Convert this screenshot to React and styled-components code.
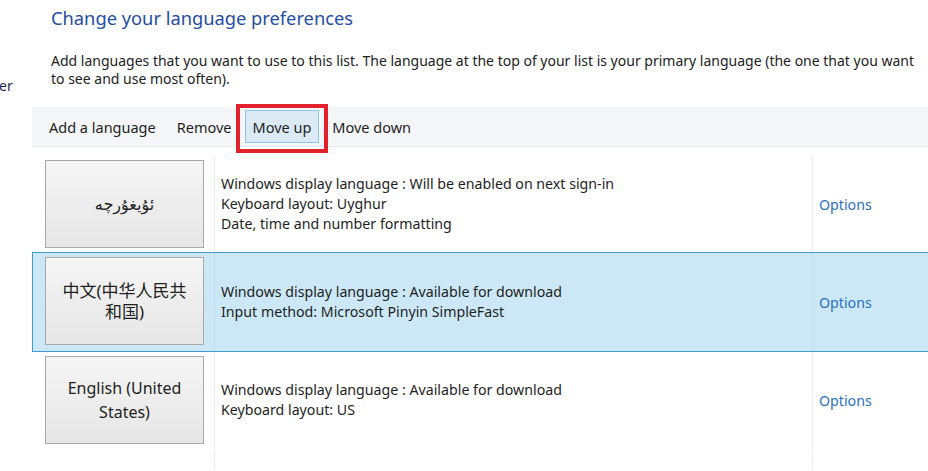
import React from "react";
import styled, {createGlobalStyle} from "styled-components";

const GlobalStyle = createGlobalStyle`
  html, body {
    margin: 0;
    padding: 0;
    background: #fff;
    overflow: hidden;
  }
  body {
    font-family: "Noto Sans", "Noto Sans CJK SC", "DejaVu Sans", sans-serif;
    color: #1e1e1e;
  }
`

const languages = [
  {
    name: 'ئۇيغۇرچە',
    lang: 'ug',
    lines: [
      'Windows display language : Will be enabled on next sign-in',
      'Keyboard layout: Uyghur',
      'Date, time and number formatting',
    ],
  },
  {
    name: '中文(中华人民共和国)',
    lang: 'zh',
    lines: [
      'Windows display language : Available for download',
      'Input method: Microsoft Pinyin SimpleFast',
    ],
    selected: true,
  },
  {
    name: 'English (United States)',
    lang: 'en',
    lines: [
      'Windows display language : Available for download',
      'Keyboard layout: US',
    ],
  },
]

const toolbarItems = ['Add a language', 'Remove', 'Move up', 'Move down']

export default function App() {
  return (
    <>
      <GlobalStyle/>
      <Page>
        <Nav>
          <NavLink>er</NavLink>
        </Nav>
        <Main>
          <Title>Change your language preferences</Title>
          <Description>
            Add languages that you want to use to this list. The language at the top of your list is your primary language (the one that you want
            to see and use most often).
          </Description>
          <Toolbar>
            {toolbarItems.map(item => (
              <ToolButton key={item} $active={item === 'Move up'}>
                {item}
                {item === 'Move up' && <Highlight/>}
              </ToolButton>
            ))}
          </Toolbar>
          <List>
            {languages.map(lang => (
              <Row key={lang.name} $selected={lang.selected}>
                <NameCell>
                  <LangButton lang={lang.lang}>{lang.name}</LangButton>
                </NameCell>
                <InfoCell $selected={lang.selected}>
                  {lang.lines.map(line => <p key={line}>{line}</p>)}
                </InfoCell>
                <OptionsCell $selected={lang.selected}>
                  <OptionsLink>Options</OptionsLink>
                </OptionsCell>
              </Row>
            ))}
            <Row $filler>
              <NameCell/>
              <InfoCell/>
              <OptionsCell/>
            </Row>
          </List>
        </Main>
      </Page>
    </>
  )
}

const Page = styled.div`
  display: grid;
  grid-template-columns: 32px 1fr;
  width: 928px;
  height: 471px;
  overflow: hidden;
`

const Nav = styled.div`
  overflow: hidden;
  padding-top: 74px;
`
const NavLink = styled.span`
  font-size: 14px;
  color: #1b2b5c;
  margin-left: -1px;
`

const Main = styled.div`
  display: flex;
  flex-direction: column;
  min-width: 0;
`

const Title = styled.h1`
  margin: 4px 0 0 19px;
  font-size: 18.3px;
  line-height: 28px;
  font-weight: 400;
  color: #1f4ea3;
`

const Description = styled.p`
  margin: 20px 0 0 19px;
  font-size: 14px;
  line-height: 18px;
  color: #222;
  white-space: pre-line;
`

const Toolbar = styled.div`
  margin-top: 19px;
  height: 39px;
  display: flex;
  align-items: center;
  gap: 5px;
  padding-left: 9px;
  background: #f4f6f9;
  border-bottom: 1px solid #e5e8ec;
`

const ToolButton = styled.div`
  position: relative;
  height: 33px;
  display: flex;
  align-items: center;
  padding: 0 7px;
  font-size: 14.5px;
  color: #1e1e1e;
  box-sizing: border-box;
  border: 1px solid ${p => p.$active ? '#8cc6ea' : 'transparent'};
  background: ${p => p.$active ? '#dceaf6' : 'transparent'};
`

const Highlight = styled.span`
  position: absolute;
  left: -10px;
  right: -10px;
  top: -7px;
  bottom: -11px;
  border: 4px solid #e1212b;
  pointer-events: none;
`

const List = styled.div`
  margin-top: 8px;
  flex: 1;
  display: flex;
  flex-direction: column;
`

const Row = styled.div`
  display: grid;
  grid-template-columns: 181px 598px 1fr;
  flex: ${p => p.$filler ? 1 : 'none'};
  box-sizing: border-box;
  border-top: 1px solid ${p => p.$selected ? '#3d9bd2' : 'transparent'};
  border-bottom: 1px solid ${p => p.$selected ? '#3d9bd2' : 'transparent'};
  border-left: 1px solid ${p => p.$selected ? '#3d9bd2' : 'transparent'};
  margin: ${p => p.$selected ? '-1px 0' : '0'};
  height: ${p => p.$filler ? 'auto' : p.$selected ? '100px' : '98px'};
  background: ${p => p.$selected ? '#cce8f7' : 'transparent'};
`

const NameCell = styled.div`
  display: flex;
  align-items: flex-start;
  padding: 4px 0 0 12px;
`

const LangButton = styled.div`
  width: 159px;
  height: 88px;
  box-sizing: border-box;
  display: flex;
  align-items: center;
  justify-content: center;
  text-align: center;
  padding: 0 12px;
  font-size: 16px;
  line-height: 24px;
  color: #1e1e1e;
  border: 1px solid #a9a9a9;
  background: linear-gradient(180deg, #f5f5f5 0%, #e6e6e6 100%);

  &:lang(zh) {
    font-size: 17px;
    line-height: 21px;
  }
`

const InfoCell = styled.div`
  display: flex;
  flex-direction: column;
  justify-content: center;
  padding-left: 6px;
  border-left: 1px solid ${p => p.$selected ? '#c3deef' : '#e9eef3'};
  font-size: 14.2px;
  line-height: 20px;
  color: #1e1e1e;

  > p {
    margin: 0;
    white-space: nowrap;
  }
`

const OptionsCell = styled.div`
  display: flex;
  align-items: center;
  padding-left: 6px;
  border-left: 1px solid ${p => p.$selected ? '#c3deef' : '#e9eef3'};
`

const OptionsLink = styled.span`
  font-size: 14.2px;
  color: #2b6fc1;
`
